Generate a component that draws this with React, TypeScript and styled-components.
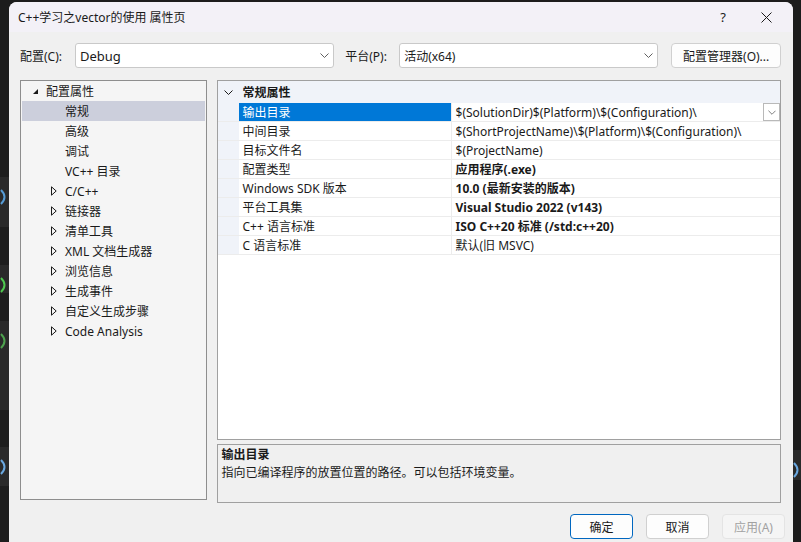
import React from "react";
import styled, { createGlobalStyle } from "styled-components";

const GlobalStyle = createGlobalStyle`
  html, body {
    margin: 0;
    padding: 0;
    background: #1c1c1c;
  }
  body {
    font-family: "Noto Sans", "Noto Sans CJK SC", sans-serif;
    font-size: 12px;
    color: #1a1a1a;
  }
`;

const treeItems = [
  { label: "常规", selected: true },
  { label: "高级" },
  { label: "调试" },
  { label: "VC++ 目录" },
  { label: "C/C++", expandable: true },
  { label: "链接器", expandable: true },
  { label: "清单工具", expandable: true },
  { label: "XML 文档生成器", expandable: true },
  { label: "浏览信息", expandable: true },
  { label: "生成事件", expandable: true },
  { label: "自定义生成步骤", expandable: true },
  { label: "Code Analysis", expandable: true },
];

const props = [
  { name: "输出目录", value: "$(SolutionDir)$(Platform)\\$(Configuration)\\", selected: true },
  { name: "中间目录", value: "$(ShortProjectName)\\$(Platform)\\$(Configuration)\\" },
  { name: "目标文件名", value: "$(ProjectName)" },
  { name: "配置类型", value: "应用程序(.exe)", bold: true },
  { name: "Windows SDK 版本", value: "10.0 (最新安装的版本)", bold: true },
  { name: "平台工具集", value: "Visual Studio 2022 (v143)", bold: true },
  { name: "C++ 语言标准", value: "ISO C++20 标准 (/std:c++20)", bold: true },
  { name: "C 语言标准", value: "默认(旧 MSVC)" },
];

// bits of the code editor peeking out behind the dialog
const leftStrip = [
  { h: 18, bg: "#1e1e1e" },
  { h: 54, bg: "#2a2a2a", mark: "#569cd6" },
  { h: 40, bg: "#1e1e1e" },
  { h: 30, bg: "#2a2a2a", mark: "#4ec94e" },
  { h: 30, bg: "#1e1e1e" },
  { h: 96, bg: "#2a2a2a", mark: "#4ea24e" },
  { h: 40, bg: "#1e1e1e" },
  { h: 42, bg: "#2a2a2a", mark: "#6aa8e0" },
  { h: 60, bg: "#1e1e1e" },
];

const Screen = styled.div`
  display: flex;
  height: 542px;
  overflow: hidden;
  background: #1c1c1c;
`;

const Strip = styled.div<{ $w: number; $top: number }>`
  width: ${(p) => p.$w}px;
  flex-shrink: 0;
  display: flex;
  flex-direction: column;
  padding-top: ${(p) => p.$top}px;
  overflow: hidden;
`;

const StripBlock = styled.div<{ $h: number; $bg: string }>`
  height: ${(p) => p.$h}px;
  background: ${(p) => p.$bg};
  padding-top: 10px;
  box-sizing: border-box;
  overflow: hidden;
`;

const Window = styled.div`
  width: 784px;
  flex-shrink: 0;
  margin-top: 2px;
  background: #f0f0f0;
  border-radius: 8px 8px 0 0;
  display: flex;
  flex-direction: column;
  overflow: hidden;
`;

const TitleBar = styled.div`
  height: 30px;
  background: #f3f1f7;
  display: flex;
  align-items: center;
  padding-left: 9px;
`;

const TitleText = styled.div`
  flex: 1;
  font-size: 12px;
  color: #1a1a1a;
`;

const TitleButton = styled.div<{ $w: number }>`
  width: ${(p) => p.$w}px;
  height: 30px;
  display: flex;
  align-items: center;
  justify-content: center;
  font-size: 13px;
  color: #1a1a1a;
`;

const Body = styled.div`
  padding: 11px 12px 0 11px;
`;

const ConfigRow = styled.div`
  display: flex;
  align-items: center;
  height: 25px;
`;

const Label = styled.div<{ $w: number; $ml?: number }>`
  width: ${(p) => p.$w}px;
  margin-left: ${(p) => p.$ml || 0}px;
  flex-shrink: 0;
`;

const Select = styled.div<{ $fs?: number }>`
  width: 260px;
  height: 25px;
  box-sizing: border-box;
  background: #ffffff;
  border: 1px solid #c9c9c9;
  border-radius: 3px;
  display: flex;
  align-items: center;
  justify-content: space-between;
  padding: 0 4px 0 4px;
  font-size: ${(p) => p.$fs || 13}px;
`;

const PushButton = styled.button<{ $primary?: boolean; $disabled?: boolean; $w: number; $ml?: number }>`
  width: ${(p) => p.$w}px;
  height: 25px;
  margin-left: ${(p) => p.$ml || 0}px;
  box-sizing: border-box;
  font-family: inherit;
  font-size: 12px;
  color: ${(p) => (p.$disabled ? "#a2a2a2" : "#1a1a1a")};
  background: ${(p) => (p.$disabled ? "#f5f5f5" : "#fdfdfd")};
  border: 1px solid ${(p) => (p.$primary ? "#0067c0" : p.$disabled ? "#e4e4e4" : "#d0d0d0")};
  border-radius: 4px;
  padding: 0;
`;

const Main = styled.div`
  display: flex;
  gap: 10px;
  margin-top: 12px;
`;

const Tree = styled.div`
  width: 187px;
  height: 420px;
  box-sizing: border-box;
  border: 1px solid #8e8e8e;
  background: #f5f5f5;
  padding: 0 1px;
`;

const TreeRow = styled.div<{ $selected?: boolean; $indent: number }>`
  height: 20px;
  display: flex;
  align-items: center;
  background: ${(p) => (p.$selected ? "#cccfdc" : "transparent")};
  padding-left: ${(p) => p.$indent}px;
`;

const TreeArrow = styled.span<{ $w: number }>`
  width: ${(p) => p.$w}px;
  display: flex;
  align-items: center;
`;

const RightColumn = styled.div`
  width: 566px;
  display: flex;
  flex-direction: column;
  gap: 4px;
`;

const Grid = styled.div`
  height: 360px;
  box-sizing: border-box;
  border: 1px solid #a0a0a0;
  background: #ffffff;
`;

const GridHeader = styled.div`
  height: 22px;
  display: flex;
  align-items: center;
  background: #f0f3f9;
  font-weight: bold;
  padding-left: 6px;
`;

const HeaderChevron = styled.span`
  width: 19px;
  display: flex;
  align-items: center;
`;

const PropRow = styled.div`
  display: grid;
  grid-template-columns: 21px 213px 1fr;
  height: 19px;
  box-sizing: border-box;
  border-bottom: 1px solid #ececec;
`;

const Gutter = styled.div`
  background: #f0f3f9;
`;

const NameCell = styled.div<{ $selected?: boolean }>`
  display: flex;
  align-items: center;
  padding-left: 4px;
  background: ${(p) => (p.$selected ? "#0078d7" : "#ffffff")};
  color: ${(p) => (p.$selected ? "#ffffff" : "#1a1a1a")};
  border-right: 1px solid #ececec;
  white-space: nowrap;
`;

const ValueCell = styled.div<{ $bold?: boolean }>`
  display: flex;
  align-items: center;
  justify-content: space-between;
  padding-left: 4px;
  font-weight: ${(p) => (p.$bold ? "bold" : "normal")};
  white-space: nowrap;
  overflow: hidden;
`;

const DropButton = styled.div`
  width: 17px;
  height: 18px;
  box-sizing: border-box;
  border: 1px solid #b9b9b9;
  background: #ffffff;
  display: flex;
  align-items: center;
  justify-content: center;
`;

const Description = styled.div`
  height: 59px;
  box-sizing: border-box;
  border: 1px solid #a0a0a0;
  background: #f0f0f0;
  padding: 1px 4px;
  line-height: 18px;
`;

const DescTitle = styled.div`
  font-weight: bold;
`;

const Footer = styled.div`
  display: flex;
  justify-content: flex-end;
  gap: 13px;
  margin-top: 11px;
  padding-right: 8px;
`;

const Chevron = ({ color = "#606060", w = 9 }: { color?: string; w?: number }) => (
  <svg width={w} height={5} viewBox="0 0 9 5">
    <path d="M0.5 0.5 L4.5 4.5 L8.5 0.5" fill="none" stroke={color} strokeWidth="1" />
  </svg>
);

const ExpandedArrow = () => (
  <svg width="7" height="7" viewBox="0 0 7 7">
    <path d="M6 1 L6 6 L1 6 Z" fill="#1a1a1a" />
  </svg>
);

const CollapsedArrow = () => (
  <svg width="6" height="10" viewBox="0 0 6 10">
    <path d="M0.5 0.8 L5.2 5 L0.5 9.2 Z" fill="none" stroke="#1a1a1a" strokeWidth="1" />
  </svg>
);

const CloseIcon = () => (
  <svg width="11" height="11" viewBox="0 0 11 11">
    <path d="M0.5 0.5 L10.5 10.5 M10.5 0.5 L0.5 10.5" stroke="#1a1a1a" strokeWidth="1" />
  </svg>
);

// a sliver of a code glyph cut off by the dialog edge
const CodeSliver = ({ color }: { color: string }) => (
  <svg width="9" height="20" viewBox="0 0 9 20">
    <path d="M1 3 Q8 10 1 17" fill="none" stroke={color} strokeWidth="2" />
  </svg>
);

export default function App() {
  return (
    <>
      <GlobalStyle />
      <Screen>
        <Strip $w={9} $top={160}>
          {leftStrip.map((b, i) => (
            <StripBlock key={i} $h={b.h} $bg={b.bg}>
              {b.mark && <CodeSliver color={b.mark} />}
            </StripBlock>
          ))}
        </Strip>
        <Window>
          <TitleBar>
            <TitleText>C++学习之vector的使用 属性页</TitleText>
            <TitleButton $w={40}>?</TitleButton>
            <TitleButton $w={46}>
              <CloseIcon />
            </TitleButton>
            <TitleButton $w={4} />
          </TitleBar>
          <Body>
            <ConfigRow>
              <Label $w={55}>配置(C):</Label>
              <Select>
                <span>Debug</span>
                <Chevron />
              </Select>
              <Label $w={54} $ml={11}>平台(P):</Label>
              <Select $fs={12}>
                <span>活动(x64)</span>
                <Chevron />
              </Select>
              <PushButton $w={110} $ml={13}>配置管理器(O)...</PushButton>
            </ConfigRow>
            <Main>
              <Tree>
                <TreeRow $indent={10}>
                  <TreeArrow $w={14}>
                    <ExpandedArrow />
                  </TreeArrow>
                  配置属性
                </TreeRow>
                {treeItems.map((item) => (
                  <TreeRow key={item.label} $selected={item.selected} $indent={29}>
                    <TreeArrow $w={14}>{item.expandable && <CollapsedArrow />}</TreeArrow>
                    {item.label}
                  </TreeRow>
                ))}
              </Tree>
              <RightColumn>
                <Grid>
                  <GridHeader>
                    <HeaderChevron>
                      <Chevron color="#1a1a1a" />
                    </HeaderChevron>
                    常规属性
                  </GridHeader>
                  {props.map((p) => (
                    <PropRow key={p.name}>
                      <Gutter />
                      <NameCell $selected={p.selected}>{p.name}</NameCell>
                      <ValueCell $bold={p.bold}>
                        <span>{p.value}</span>
                        {p.selected && (
                          <DropButton>
                            <Chevron w={8} color="#707070" />
                          </DropButton>
                        )}
                      </ValueCell>
                    </PropRow>
                  ))}
                </Grid>
                <Description>
                  <DescTitle>输出目录</DescTitle>
                  <div>指向已编译程序的放置位置的路径。可以包括环境变量。</div>
                </Description>
              </RightColumn>
            </Main>
          </Body>
          <Footer>
            <PushButton $w={63} $primary>确定</PushButton>
            <PushButton $w={63}>取消</PushButton>
            <PushButton $w={63} $disabled>应用(A)</PushButton>
          </Footer>
        </Window>
        <Strip $w={8} $top={450}>
          <StripBlock $h={30} $bg="#2a2a2a">
            <CodeSliver color="#6aa8e0" />
          </StripBlock>
        </Strip>
      </Screen>
    </>
  );
}
